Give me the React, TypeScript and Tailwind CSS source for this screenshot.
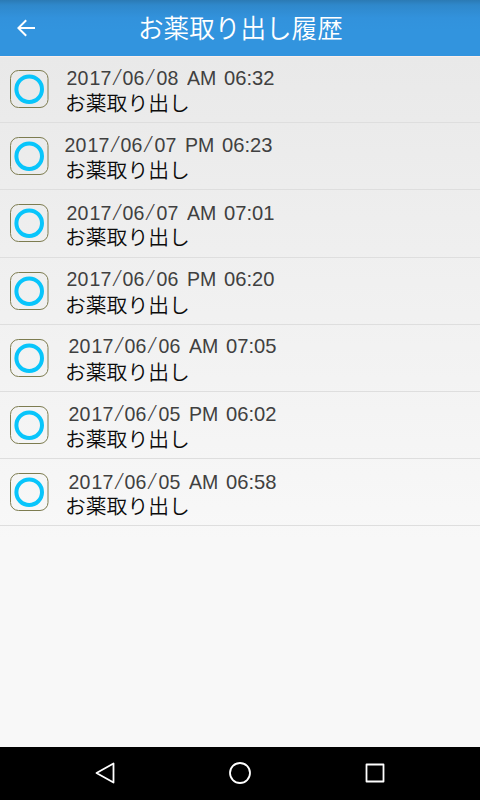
type Entry = {
  date: string;
  period: string;
  time: string;
  offset: string;
};

const entries: Entry[] = [
  { date: "2017/06/08", period: "AM", time: "06:32", offset: "ml-[1.5px] pt-[10px]" },
  { date: "2017/06/07", period: "PM", time: "06:23", offset: "-ml-[0.5px] pt-[10px]" },
  { date: "2017/06/07", period: "AM", time: "07:01", offset: "ml-[1.5px] pt-[11px]" },
  { date: "2017/06/06", period: "PM", time: "06:20", offset: "ml-[1.5px] pt-[9px]" },
  { date: "2017/06/06", period: "AM", time: "07:05", offset: "ml-[3.5px] pt-[9px]" },
  { date: "2017/06/05", period: "PM", time: "06:02", offset: "ml-[3.5px] pt-[10px]" },
  { date: "2017/06/05", period: "AM", time: "06:58", offset: "ml-[3.5px] pt-[11px]" },
];

const DateText = ({ value }: { value: string }) => (
  <span className="flex w-[120px]">
    {value.split("").map((char, i) =>
      char === "/" ? (
        <span
          key={i}
          className="flex w-[11.2px] justify-center font-['Noto_Sans_CJK_JP',sans-serif] text-[16.5px] leading-[19px] font-light"
        >
          <span className="scale-x-[1.5]">{char}</span>
        </span>
      ) : (
        <span key={i} className="flex w-[11.2px] justify-center">
          <span className="scale-x-[0.93]">{char}</span>
        </span>
      ),
    )}
  </span>
);

const Row = ({ entry }: { entry: Entry }) => (
  <li className="flex h-[67.2px] border-b border-[#dedede] pl-[9px]">
    <svg viewBox="0 0 40 40" className="mt-[13px] h-10 w-10 shrink-0" fill="none">
      <rect x="1.5" y="1.5" width="37.5" height="37" rx="8" stroke="#7d7c50" />
      <circle cx="20.2" cy="20.2" r="12.8" stroke="#08c5fb" strokeWidth="4" />
    </svg>
    <div className="ml-4">
      <div
        className={`flex h-[34px] font-['Liberation_Sans',sans-serif] text-[21px] leading-[24px] text-[#404040] ${entry.offset}`}
      >
        <DateText value={entry.date} />
        <span className="w-[37px] origin-left scale-x-[0.93]">{entry.period}</span>
        <span className="origin-left scale-x-[0.96]">{entry.time}</span>
      </div>
      <p className="text-[20.8px] leading-[24px] font-[350] text-[#0c0c0c]">お薬取り出し</p>
    </div>
  </li>
);

const App = () => {
  return (
    <div className="flex h-[800px] w-[480px] flex-col overflow-hidden font-['Noto_Sans_CJK_JP',sans-serif]">
      <header className="flex h-14 shrink-0 items-center bg-[linear-gradient(#2b7ab4_0px,#2f88cb_5px,#3292dc_18px,#3294de_30px)] text-white">
        <svg viewBox="0 0 24 24" className="ml-[14px] h-6 w-6" fill="currentColor">
          <path d="M21 11H6.8l6.1-6.1L11.5 3.5 3 12l8.5 8.5 1.4-1.4L6.8 13H21z" />
        </svg>
        <h1 className="ml-[100px] pb-[2px] whitespace-nowrap text-[25.6px] leading-8 font-[350]">お薬取り出し履歴</h1>
      </header>
      <main className="flex-1 bg-[linear-gradient(#fbeeea_1px,#e9e9e9_1px,#f8f8f8_70%)]">
        <ul>
          {entries.map((entry) => (
            <Row key={entry.date + entry.period} entry={entry} />
          ))}
        </ul>
      </main>
      <nav className="flex h-[53px] shrink-0 items-center justify-between bg-black px-[93px] pb-px text-white">
        <svg viewBox="0 0 24 24" className="h-6 w-6" fill="none" stroke="currentColor" strokeWidth="1.8" strokeLinejoin="round">
          <path d="M20.5 2.5v19L3.5 12z" />
        </svg>
        <svg viewBox="0 0 24 24" className="h-6 w-6" fill="none" stroke="currentColor" strokeWidth="1.8">
          <circle cx="12" cy="12" r="10" />
        </svg>
        <svg viewBox="0 0 24 24" className="h-6 w-6" fill="none" stroke="currentColor" strokeWidth="1.8" strokeLinejoin="round">
          <rect x="3.5" y="3.5" width="17" height="17" />
        </svg>
      </nav>
    </div>
  );
};

export default App;
